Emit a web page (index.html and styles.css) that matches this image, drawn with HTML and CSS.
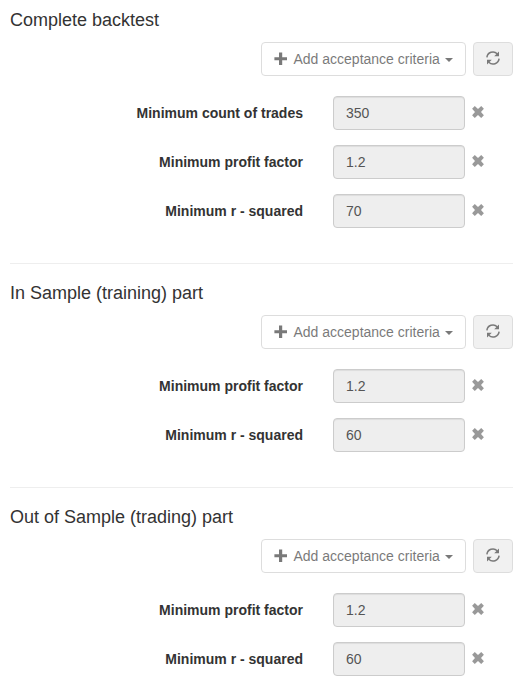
FILE: index.html
```html
<!DOCTYPE html>
<html lang="en">

<head>
  <meta charset="UTF-8" />
  <meta name="viewport" content="width=device-width, initial-scale=1.0" />
  <title>Acceptance criteria</title>
  <link rel="stylesheet" href="styles.css">
</head>

<body>

  <!-- Icons -->
  <svg class="sprite" width="0" height="0">
    <symbol id="icon-plus" viewBox="0 0 14 14">
      <path d="M5 .5h3.2v4.7H13v3H8.2V13H5V8.2H.4v-3H5z" />
    </symbol>
    <symbol id="icon-refresh" viewBox="0 0 14 14">
      <path d="M.9 6.3A6.1 6.1 0 0 1 11.2 2.7M13.1 7.7A6.1 6.1 0 0 1 2.8 11.3" fill="none" stroke="currentColor" stroke-width="1.5" />
      <path d="M13 .4v4.9H8.2zM1 13.6V8.7H5.8z" />
    </symbol>
    <symbol id="icon-remove" viewBox="0 0 12 12">
      <path d="M2.8.1 6 3 9.2.1 11.9 2.8 9 6l2.9 3.2-2.7 2.7L6 9l-3.2 2.9L.1 9.2 3 6 .1 2.8z" />
    </symbol>
  </svg>

  <!-- Complete backtest -->
  <section class="criteria">
    <h4>Complete backtest</h4>
    <div class="toolbar">
      <button class="btn btn-add" disabled><svg class="icon"><use href="#icon-plus" /></svg>Add acceptance criteria<span class="caret"></span></button>
      <button class="btn btn-refresh" disabled><svg class="icon"><use href="#icon-refresh" /></svg></button>
    </div>
    <div class="form-group">
      <label for="complete-trades">Minimum count of trades</label>
      <input type="text" id="complete-trades" value="350" disabled />
      <svg class="remove"><use href="#icon-remove" /></svg>
    </div>
    <div class="form-group">
      <label for="complete-profit">Minimum profit factor</label>
      <input type="text" id="complete-profit" value="1.2" disabled />
      <svg class="remove"><use href="#icon-remove" /></svg>
    </div>
    <div class="form-group">
      <label for="complete-squared">Minimum r - squared</label>
      <input type="text" id="complete-squared" value="70" disabled />
      <svg class="remove"><use href="#icon-remove" /></svg>
    </div>
  </section>

  <hr>

  <!-- In Sample -->
  <section class="criteria">
    <h4>In Sample (training) part</h4>
    <div class="toolbar">
      <button class="btn btn-add" disabled><svg class="icon"><use href="#icon-plus" /></svg>Add acceptance criteria<span class="caret"></span></button>
      <button class="btn btn-refresh" disabled><svg class="icon"><use href="#icon-refresh" /></svg></button>
    </div>
    <div class="form-group">
      <label for="in-profit">Minimum profit factor</label>
      <input type="text" id="in-profit" value="1.2" disabled />
      <svg class="remove"><use href="#icon-remove" /></svg>
    </div>
    <div class="form-group">
      <label for="in-squared">Minimum r - squared</label>
      <input type="text" id="in-squared" value="60" disabled />
      <svg class="remove"><use href="#icon-remove" /></svg>
    </div>
  </section>

  <hr>

  <!-- Out of Sample -->
  <section class="criteria">
    <h4>Out of Sample (trading) part</h4>
    <div class="toolbar">
      <button class="btn btn-add" disabled><svg class="icon"><use href="#icon-plus" /></svg>Add acceptance criteria<span class="caret"></span></button>
      <button class="btn btn-refresh" disabled><svg class="icon"><use href="#icon-refresh" /></svg></button>
    </div>
    <div class="form-group">
      <label for="out-profit">Minimum profit factor</label>
      <input type="text" id="out-profit" value="1.2" disabled />
      <svg class="remove"><use href="#icon-remove" /></svg>
    </div>
    <div class="form-group">
      <label for="out-squared">Minimum r - squared</label>
      <input type="text" id="out-squared" value="60" disabled />
      <svg class="remove"><use href="#icon-remove" /></svg>
    </div>
  </section>

</body>

</html>
```

FILE: styles.css
```css
* {
  margin: 0;
  padding: 0;
  box-sizing: border-box;
}

body {
  font-family: "Liberation Sans", Arial, sans-serif;
  font-size: 14px;
  line-height: 20px;
  color: #333;
  background: #fff;
  padding: 10px 10px 0;
}

.sprite {
  display: block;
}

.criteria {
  overflow: hidden;
}

h4 {
  font-size: 18px;
  font-weight: 400;
  line-height: 20px;
  margin-bottom: 12px;
}

.toolbar {
  display: flex;
  justify-content: flex-end;
  gap: 7px;
  margin-bottom: 20px;
}

.btn {
  display: flex;
  align-items: center;
  height: 34px;
  padding: 0 12px;
  border: 1px solid #ccc;
  border-radius: 4px;
  background: #fff;
  color: #333;
  font-family: inherit;
  font-size: 14px;
  line-height: 20px;
  opacity: 0.65;
}

.btn-add {
  width: 205px;
}

.btn-add .icon {
  margin-right: 5.5px;
}

.btn-refresh {
  width: 40px;
  background: #ebebeb;
}

.btn-refresh .icon {
  margin-bottom: 2px;
}

.icon {
  flex: none;
  width: 14px;
  height: 14px;
  fill: currentColor;
}

.caret {
  margin: 2px 0 0 5px;
  border-top: 4px solid;
  border-right: 4px solid transparent;
  border-left: 4px solid transparent;
}

.form-group {
  display: flex;
  align-items: center;
  margin-bottom: 15px;
}

.form-group label {
  width: 293px;
  margin-right: 30px;
  text-align: right;
  font-weight: 700;
}

.form-group input {
  width: 132px;
  height: 34px;
  padding: 6px 12px;
  border: 1px solid #ccc;
  border-radius: 4px;
  background: #eee;
  box-shadow: inset 0 1px 1px rgba(0, 0, 0, 0.075);
  color: #555;
  font-family: inherit;
  font-size: 14px;
}

.remove {
  width: 12px;
  height: 12px;
  margin: 0 0 2px 7px;
  fill: #999;
}

hr {
  border: 0;
  border-top: 1px solid #eee;
  margin: 20px 0 19px;
}
```
